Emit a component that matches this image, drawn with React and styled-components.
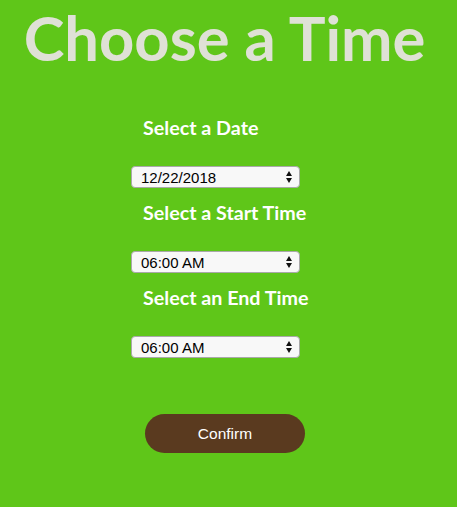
import React from 'react';
import styled, { createGlobalStyle } from 'styled-components';

const GlobalStyle = createGlobalStyle`
  html, body {
    margin: 0;
    padding: 0;
    background: #5fc619;
  }
  body {
    font-family: 'Lato', 'Liberation Sans', sans-serif;
  }
`;

const Page = styled.div`
  width: 457px;
  min-height: 507px;
  background: #5fc619;
  box-sizing: border-box;
`;

const Title = styled.h1`
  margin: 0;
  font-family: 'Lato', sans-serif;
  font-weight: 700;
  font-size: 61.5px;
  line-height: 74px;
  color: #dfe1d6;
  text-align: center;
  padding-right: 8px;
`;

const Form = styled.div`
  display: flex;
  flex-direction: column;
  align-items: flex-start;
  padding-left: 131px;
  margin-top: 43px;
`;

const Label = styled.div`
  font-family: 'Lato', sans-serif;
  font-weight: 700;
  font-size: 19.7px;
  line-height: 22px;
  color: #ffffff;
  padding-left: 12px;
  margin-top: ${(p) => (p.$first ? '0' : '14px')};
  margin-bottom: 27px;
`;

const SelectWrap = styled.div`
  position: relative;
  width: 169px;
  height: 22px;
`;

const Select = styled.select`
  appearance: none;
  -webkit-appearance: none;
  width: 100%;
  height: 100%;
  box-sizing: border-box;
  margin: 0;
  padding: 0 0 0 9px;
  border: 1px solid #a9a9a9;
  border-radius: 4px;
  background: #f8f8f8;
  font-family: 'Liberation Sans', Arial, sans-serif;
  font-size: 15px;
  color: #000;
  outline: none;
`;

const Arrows = styled.svg`
  position: absolute;
  right: 8px;
  top: 5px;
  pointer-events: none;
`;

const Button = styled.button`
  margin: 56px 0 0 14px;
  width: 160px;
  height: 39px;
  border: none;
  border-radius: 20px;
  background: #5a3a1f;
  color: #ffffff;
  font-family: 'Liberation Sans', Arial, sans-serif;
  font-size: 15.5px;
  cursor: pointer;
`;

function Picker({ value }) {
  return (
    <SelectWrap>
      <Select defaultValue={value}>
        <option>{value}</option>
      </Select>
      <Arrows width="6" height="12" viewBox="0 0 6 12">
        <path d="M3 0 L6 5 L0 5 Z" fill="#111" />
        <path d="M0 7 L6 7 L3 12 Z" fill="#111" />
      </Arrows>
    </SelectWrap>
  );
}

export default function App() {
  return (
    <Page>
      <GlobalStyle />
      <Title>Choose a Time</Title>
      <Form>
        <Label $first>Select a Date</Label>
        <Picker value="12/22/2018" />
        <Label>Select a Start Time</Label>
        <Picker value="06:00 AM" />
        <Label>Select an End Time</Label>
        <Picker value="06:00 AM" />
        <Button>Confirm</Button>
      </Form>
    </Page>
  );
}
